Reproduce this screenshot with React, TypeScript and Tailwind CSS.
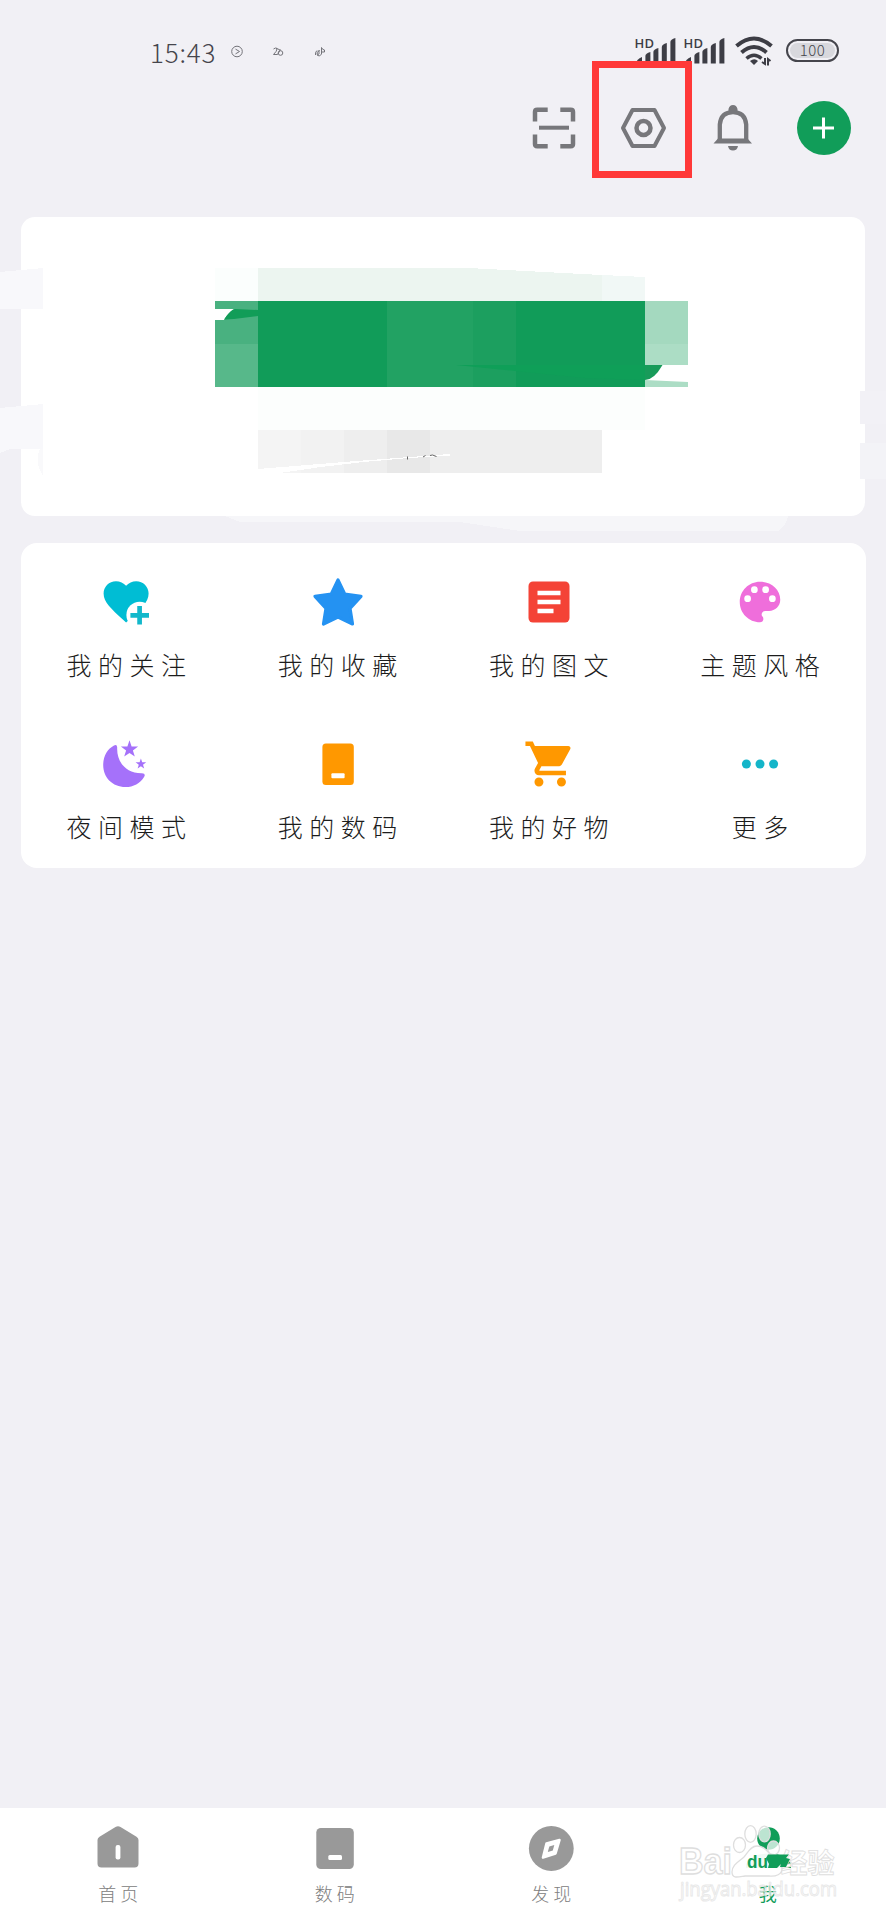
import type { ReactNode } from "react";

const STAR_SMALL = "0,-9 2.1,-2.8 8.6,-2.8 3.4,1.1 5.3,7.3 0,3.6 -5.3,7.3 -3.4,1.1 -8.6,-2.8 -2.1,-2.8";

function Signal() {
  return (
    <svg className="h-[30px] w-[49px]" viewBox="0 0 49 30" fill="#3d3d45">
      <text x="-0.500" y="12.600" fontSize="13" fontWeight="600" fontFamily="Open Sans, sans-serif" textLength="19.500">HD</text>
      <path d="M1 28.500q.5-4.500 6-6.500v6.500z" />
      <path d="M10.400 28.500v-7.500q0-2.500 5-4v11.500z" />
      <path d="M18.400 28.500v-11.500q0-2.500 5-4v15.500z" />
      <path d="M26.800 28.500v-16.500q0-2.500 5-4v20.500z" />
      <path d="M35.400 28.500v-21.500q0-2.500 5-4v25.500z" />
    </svg>
  );
}

function StatusBar() {
  return (
    <div className="flex h-20 items-start text-[#45454c]">
      <div className="flex flex-1 items-center pt-[37px] pl-[150px]">
        <span className="w-[66px] text-[26px] leading-[30px] tracking-[0.8px] font-light">15:43</span>
        <svg className="ml-[14px] h-[14px] w-[100px]" viewBox="0 0 100 14" fill="none" stroke="#74747a" strokeWidth="1">
          <circle cx="7" cy="6.500" r="5.300" />
          <path d="m5.500 4.100 4 2.400-4 2.400" />
          <path d="M43.500 4q2-2 3.500 0 0 2-3.500 5.500h4l3-5M46 3l4 2" />
          <circle cx="50.500" cy="8" r="2.300" />
          <path d="M91.500 2.500v6.500q-1.500 3-4 1.500-2-3.500 2-5M91.500 2.500q1 2.500 3 2.500v2h-3M89 5v4q-1 1-1.500 0M85.500 10q-.5-3 1.500-4.500" />
        </svg>
      </div>
      <div className="flex items-start pt-[35px] pr-[47px]">
        <Signal />
        <Signal />
        <svg className="ml-[2px] h-[32px] w-[40px]" viewBox="0 0 40 32" fill="none" stroke="#3d3d45">
          <path d="M1.500 11Q19-4 36.500 11" strokeWidth="4" />
          <path d="M6.500 17.500Q19 6.500 31.500 17.500" strokeWidth="4" />
          <path d="M11.500 23.500q7.500-6.500 15 0" strokeWidth="3.500" />
          <path d="m15 26q4.500-3.500 8 0L19 30z" fill="#3d3d45" stroke="none" />
          <path d="M30 23v6l-3-2M33 30.500v-6.500l2.500 2" strokeWidth="2" />
        </svg>
        <div className="mt-[4px] ml-[11px] flex h-[23px] w-[53px] items-center justify-center rounded-full border-2 border-[#45454c] p-[2px]">
          <span className="flex h-full w-full items-center justify-center rounded-full bg-[#d8d8dd] text-[15px] font-light tracking-[0.5px]">100</span>
        </div>
      </div>
    </div>
  );
}

function Toolbar() {
  return (
    <div className="flex h-[96px] justify-end pr-[18px] text-[#77777b]">
      <button className="flex w-[91px] items-center justify-center">
        <svg className="h-[54px] w-[54px]" viewBox="0 0 54 54" fill="none" stroke="currentColor" strokeWidth="4.500">
          <path d="M8 20.500V11q0-2.200 2.200-2.200h10.500M33.300 8.800h10.500Q46 8.800 46 11v9.500M46 33.500V43q0 2.200-2.200 2.200H33.300M20.700 45.200H10.200Q8 45.200 8 43v-9.500" />
          <path d="M12 26.700h30" strokeWidth="4" />
        </svg>
      </button>
      <button className="relative flex w-[90px] items-center justify-center">
        <svg className="h-[54px] w-[54px]" viewBox="0 0 54 54" fill="none" stroke="currentColor" strokeWidth="4">
          <path d="M15.500 9h22L47 27l-9.500 18h-22L6 27z" strokeLinejoin="round" />
          <circle cx="26.500" cy="27" r="7" strokeWidth="4.500" />
        </svg>
        <span className="absolute top-[-19px] left-[-7px] h-[117px] w-[100px] border-[7px] border-[#ff3838]" />
      </button>
      <button className="flex w-[90px] items-center justify-center">
        <svg className="h-[54px] w-[54px]" viewBox="0 0 54 54">
          <path d="M12.800 40V23.500Q14 11.200 26 11.200T39.200 23.500V40" fill="none" stroke="currentColor" strokeWidth="4.300" />
          <path d="M6.500 42.500 11 37.500h29.500l4.500 5zM21.500 10V8q1-4 4.500-4t4.500 4v2zM21 45h10q-.8 4.500-5 4.500T21 45" fill="currentColor" />
        </svg>
      </button>
      <button className="flex w-[89px] items-center justify-center">
        <span className="flex h-[54px] w-[54px] items-center justify-center rounded-full bg-[#119d59]">
          <svg className="h-[22px] w-[22px]" viewBox="0 0 22 22" stroke="#fff" strokeWidth="3"><path d="M10.500 .5v21M0 11h21" /></svg>
        </span>
      </button>
    </div>
  );
}

const tiles: [number, number, number, number, string][] = [
  [215, 268, 43, 33, "#fbfefd"],
  [215, 301, 43, 43, "#49b180"],
  [215, 344, 43, 43, "#57b88a"],
  [258, 301, 129, 86, "#119c59"],
  [387, 301, 86, 86, "#22a263"],
  [473, 301, 43, 86, "#1c9f5f"],
  [516, 301, 129, 86, "#119c59"],
  [645, 301, 43, 43, "#a4d9bf"],
  [645, 344, 43, 43, "#acddc5"],
  [258, 387, 387, 43, "#fcfefd"],
  [258, 430, 43, 43, "#f4f4f4"],
  [301, 430, 43, 43, "#f2f2f2"],
  [344, 430, 43, 43, "#eeeeee"],
  [387, 430, 43, 43, "#e8e8e8"],
  [430, 430, 172, 43, "#eeeeee"],
];

function MaskedProfile() {
  return (
    <svg className="absolute top-0 left-0 h-[340px] w-[886px]" viewBox="0 200 886 340">
      <g shapeRendering="crispEdges">
        <path d="M0 272 43 268v41H0zM0 408l43-4v45H10l-10 4z" fill="#f8f8fb" />
        <path d="M43 449h-3q-6 12 3 27z" fill="#f9f9fb" />
        <path d="M860 391h26v33h-26z" fill="#f2f1f6" />
        <path d="M860 443h26v36h-26z" fill="#f3f3f7" />
        <path d="M225 516h563q-2 10-10 15H520l-60-9H240z" fill="#f6f6f9" />
        <path d="M258 268h210l134 7v26H258z" fill="#ecf5f0" />
        <path d="m602 275 43 2v24h-43z" fill="#f1f8f6" />
        {tiles.map(([x, y, w, h, c]) => (
          <rect key={`${x}-${y}`} x={x} y={y} width={w} height={h} fill={c} />
        ))}
        <path d="M258 469q95-8 192-15v1.500Q360 460 280 473h-22z" fill="#fff" />
      </g>
      <path d="M215 309h19q-6 4-10 11h-9z" fill="#fff" />
      <path d="M224 319.500q7-10.500 11-10.500l23 1v6l-24 3z" fill="#129d58" />
      <path d="M456 365h189v15l-60-2z" fill="#0f9f58" />
      <path d="M645 365h43v17l-43-2z" fill="#fff" />
      <path d="M645 365h17.500Q654 380 645 380z" fill="#189b5a" />
      <path d="M407.500 456.500v3M423 457l2.500-1.500M430 455.500l2.500-.5 4 1.500" fill="none" stroke="#666" strokeWidth="1" />
    </svg>
  );
}

function Glyph({ children }: { children: ReactNode }) {
  return <svg className="h-[54px] w-[54px]" viewBox="0 0 54 54">{children}</svg>;
}

const shortcuts: { label: string; icon: ReactNode }[] = [
  {
    label: "我的关注",
    icon: (
      <Glyph>
        <path transform="translate(-.9 -.6) scale(2.250)" fill="#00bdd4" d="M12 21.350l-1.450-1.320C5.400 15.360 2 12.280 2 8.500 2 5.420 4.420 3 7.500 3c1.740 0 3.410.81 4.500 2.090C13.090 3.810 14.760 3 16.500 3 19.580 3 22 5.420 22 8.500c0 3.780-3.400 6.860-8.550 11.540L12 21.350z" />
        <circle cx="39.700" cy="40" r="13.300" fill="#fff" />
        <path d="M39.600 31v18.500M30.400 40.400H49" stroke="#12b8cb" strokeWidth="4.700" />
      </Glyph>
    ),
  },
  {
    label: "我的收藏",
    icon: (
      <Glyph>
        <path d="m27 5 6.700 14 16.300 2.300-11 12 2.500 15.700L27 42l-14.500 7L15 33.300l-11-12L20.300 19z" fill="#2492f2" stroke="#2492f2" strokeWidth="3.200" strokeLinejoin="round" />
      </Glyph>
    ),
  },
  {
    label: "我的图文",
    icon: (
      <Glyph>
        <rect x="6.500" y="6.500" width="41" height="41" rx="4.500" fill="#f44336" />
        <path d="M15.500 18h23M15.500 27h23M15.500 36h16" stroke="#fff" strokeWidth="4.600" />
      </Glyph>
    ),
  },
  {
    label: "主题风格",
    icon: (
      <Glyph>
        <g transform="scale(2.250)">
          <path fill="#ef6edb" d="M12 3c-4.970 0-9 4.030-9 9s4.030 9 9 9c.83 0 1.500-.67 1.500-1.500 0-.39-.15-.74-.39-1.010-.23-.26-.38-.61-.38-.99 0-.83.67-1.500 1.500-1.500H16c2.760 0 5-2.240 5-5 0-4.420-4.030-8-9-8z" />
          <g fill="#fff">
            <circle cx="6.500" cy="10.500" r="1.500" />
            <circle cx="9.500" cy="6.500" r="1.500" />
            <circle cx="14.500" cy="6.500" r="1.500" />
            <circle cx="17.500" cy="10.500" r="1.500" />
          </g>
        </g>
      </Glyph>
    ),
  },
  {
    label: "夜间模式",
    icon: (
      <Glyph>
        <g fill="#a571fa">
          <path d="M14 8.500Q17 7 17.200 10.500C16.500 25 26 36.500 42 36.200q4 .3 2.200 3.500C40 46.500 33.500 50 25.500 50 12.500 50 3.200 40.500 3.200 28 3.200 19 7.500 12 14 8.500z" />
          <polygon transform="translate(29.500 12.300)" points={STAR_SMALL} />
          <polygon transform="translate(40.900 27) scale(.62)" points={STAR_SMALL} />
        </g>
      </Glyph>
    ),
  },
  {
    label: "我的数码",
    icon: (
      <Glyph>
        <rect x="11.400" y="6.500" width="31.400" height="41.500" rx="3.500" fill="#ff9800" />
        <rect x="20.400" y="36.300" width="13.200" height="5" rx="1" fill="#fff" />
      </Glyph>
    ),
  },
  {
    label: "我的好物",
    icon: (
      <Glyph>
        <path transform="translate(1.200 0) scale(2.250)" fill="#ff9800" d="M7 18c-1.100 0-1.990.9-1.990 2S5.900 22 7 22s2-.9 2-2-.9-2-2-2zM1 2v2h2l3.600 7.590-1.350 2.450c-.16.28-.25.61-.25.960 0 1.100.9 2 2 2h12v-2H7.420c-.14 0-.25-.11-.25-.25l.03-.12.9-1.630h7.450c.75 0 1.410-.41 1.750-1.030l3.580-6.490A1.003 1.003 0 0 0 20 4H5.210l-.94-2H1zm16 16c-1.100 0-1.990.9-1.990 2s.89 2 1.990 2 2-.9 2-2-.9-2-2-2z" />
      </Glyph>
    ),
  },
  {
    label: "更多",
    icon: (
      <Glyph>
        <g fill="#14b5c9">
          <circle cx="13.400" cy="27" r="4.500" />
          <circle cx="27" cy="27" r="4.500" />
          <circle cx="40.600" cy="27" r="4.500" />
        </g>
      </Glyph>
    ),
  },
];

const tabs: { label: string; active?: boolean; icon: ReactNode }[] = [
  {
    label: "首页",
    icon: (
      <Glyph>
        <path d="M24.500 7q2.500-1.500 5 0l16 9.800q2 1.200 2 3.200v23.500q0 4-4 4h-33q-4 0-4-4V20q0-2 2-3.200z" fill="#999" />
        <rect x="24.600" y="25" width="4.800" height="14.500" rx="2" fill="#fff" />
      </Glyph>
    ),
  },
  {
    label: "数码",
    icon: (
      <Glyph>
        <rect x="8.300" y="8" width="37.500" height="41" rx="4.500" fill="#999" />
        <rect x="20.300" y="35" width="13.700" height="5" rx="1.500" fill="#fff" />
      </Glyph>
    ),
  },
  {
    label: "发现",
    icon: (
      <Glyph>
        <circle cx="27.300" cy="28.500" r="22.400" fill="#999" />
        <path d="m22.500 23.500 13-3.500-4 13.500-12.500 4z" fill="#fff" stroke="#fff" strokeWidth="2.600" strokeLinejoin="round" />
        <path d="m25.300 26.500 5-1.500-1.500 5.500-5 1.500z" fill="#999" />
      </Glyph>
    ),
  },
  {
    label: "我",
    active: true,
    icon: (
      <Glyph>
        <circle cx="27.500" cy="18.500" r="11.300" fill="#119d59" />
        <path d="M5 48v-4Q10 33.500 27.500 33.500T50 44v4z" fill="#119d59" />
      </Glyph>
    ),
  },
];

function Watermark() {
  return (
    <svg className="pointer-events-none absolute right-[44px] bottom-[12px] h-[84px] w-[166px]" viewBox="676 1824 166 84" fill="#fff" stroke="#dedede" strokeWidth="1.300">
      <g fontFamily="Liberation Sans, Noto Sans CJK SC, sans-serif" fontWeight="700">
        <text x="679" y="1874" fontSize="36" textLength="53" lengthAdjust="spacingAndGlyphs">Bai</text>
        <text x="780.500" y="1873" fontSize="27" fontFamily="Noto Sans CJK SC, sans-serif" textLength="54" strokeWidth="0.800">经验</text>
      </g>
      <path d="M757 1846c-7 0-9 7-13 11-6 5-12 8-12 15s6 5 13 4h24c7 1 13-2 13-7 0-6-7-9-11-14-4-4-7-9-14-9z" fillOpacity=".94" />
      <g fillOpacity=".72">
        <ellipse cx="739.500" cy="1845" rx="6" ry="7.500" />
        <ellipse cx="750.500" cy="1834" rx="5.700" ry="8.300" />
        <ellipse cx="764.500" cy="1834" rx="5.700" ry="7.800" />
        <ellipse cx="773.500" cy="1848" rx="6" ry="7" />
      </g>
      <path d="M768 1854.500h21l-3 3.500 4 1-4 8h-6l1-3-4 4h-9l1-4-3-6z" fill="#119d59" stroke="none" />
      <text x="747" y="1868" fontSize="19" fontWeight="700" fontFamily="Liberation Sans, sans-serif" textLength="21" lengthAdjust="spacingAndGlyphs" fill="#119d59" stroke="none">du</text>
      <text x="680" y="1895.500" fontSize="20" fontFamily="Open Sans, sans-serif" textLength="157" lengthAdjust="spacingAndGlyphs" fillOpacity=".45" stroke="#e3e3e3" strokeOpacity=".8" strokeWidth="1">jingyan.baidu.com</text>
    </svg>
  );
}

export default function App() {
  return (
    <div className="flex h-[1920px] w-[886px] flex-col overflow-hidden bg-[#f1f0f5] font-['Noto_Sans_CJK_SC',sans-serif]">
      <StatusBar />
      <Toolbar />
      <main className="relative flex-1">
        <section className="mt-[41px] mr-[21px] ml-[21px] h-[299px] rounded-[14px] bg-white" />
        <div className="absolute top-[24px] left-0">
          <MaskedProfile />
        </div>
        <section className="mt-[27px] mr-[20px] ml-[21px] grid h-[325px] grid-cols-4 rounded-[16px] bg-white pt-[32px] [grid-auto-rows:162px]">
          {shortcuts.map(({ label, icon }) => (
            <button key={label} className="flex flex-col items-center">
              {icon}
              <span className="mt-[17px] pl-[6px] text-[25px] leading-[36px] font-light tracking-[6.500px] text-[#1c1c1c]">{label}</span>
            </button>
          ))}
        </section>
      </main>
      <nav className="relative flex h-[112px] bg-white px-[10px] pt-[12px]">
        {tabs.map(({ label, icon, active }) => (
          <button key={label} className="flex flex-1 flex-col items-center">
            {icon}
            <span className={`mt-[6px] pl-[4px] text-[18px] leading-[26px] tracking-[4px] ${active ? "font-normal text-[#119d59]" : "font-light text-[#808080]"}`}>{label}</span>
          </button>
        ))}
        <Watermark />
      </nav>
    </div>
  );
}
